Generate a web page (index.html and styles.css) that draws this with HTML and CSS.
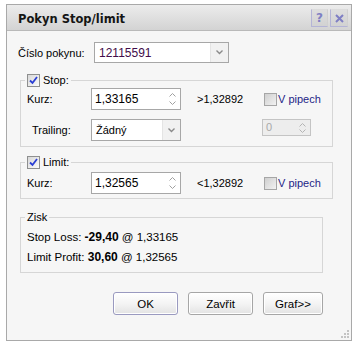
FILE: index.html
```html
<!DOCTYPE html>
<html lang="cs">
<head>
    <meta charset="UTF-8">
    <title>Pokyn Stop/limit</title>
    <link rel="stylesheet" href="styles.css">
</head>
<body>
    <div class="window">
        <div class="titlebar">
            <span class="title">Pokyn Stop/limit</span>
            <div class="title-buttons">
                <span class="tbtn help">?</span>
                <span class="tbtn close">
                    <svg width="9" height="9" viewBox="0 0 9 9"><path d="M1 1L8 8M8 1L1 8" stroke="#7f7fc4" stroke-width="2"/></svg>
                </span>
            </div>
        </div>

        <div class="content">
            <div class="order-row">
                <label class="order-label">Číslo pokynu:</label>
                <div class="combo order-combo">
                    <span class="combo-value order-value">12115591</span>
                    <span class="combo-drop">
                        <svg width="7" height="5" viewBox="0 0 7 5"><path d="M0.5 0.5L3.5 3.5L6.5 0.5" fill="none" stroke="#8a8a8a" stroke-width="1.4"/></svg>
                    </span>
                </div>
            </div>

            <fieldset class="group stop-group">
                <legend><span class="check checked"><svg width="9" height="9" viewBox="0 0 9 9"><path d="M1 4.5L3.5 7L8 1" fill="none" stroke="#2b3fd4" stroke-width="1.8"/></svg></span>Stop:</legend>
                <div class="row">
                    <span class="field-label">Kurz:</span>
                    <div class="spin">
                        <span class="spin-value">1,33165</span>
                        <span class="spin-arrows">
                            <svg width="7" height="4" viewBox="0 0 7 4"><path d="M0.5 3.5L3.5 0.5L6.5 3.5" fill="none" stroke="#a0a0a0"/></svg>
                            <svg width="7" height="4" viewBox="0 0 7 4"><path d="M0.5 0.5L3.5 3.5L6.5 0.5" fill="none" stroke="#a0a0a0"/></svg>
                        </span>
                    </div>
                    <span class="limit-value">&gt;1,32892</span>
                    <span class="check disabled"></span><span class="pips">V pipech</span>
                </div>
                <div class="row trailing-row">
                    <span class="field-label trailing-label">Trailing:</span>
                    <div class="combo trailing-combo">
                        <span class="combo-value">Žádný</span>
                        <span class="combo-drop">
                            <svg width="7" height="5" viewBox="0 0 7 5"><path d="M0.5 0.5L3.5 3.5L6.5 0.5" fill="none" stroke="#8a8a8a" stroke-width="1.4"/></svg>
                        </span>
                    </div>
                    <div class="mini-spin">
                        <span class="mini-value">0</span>
                        <span class="spin-arrows">
                            <svg width="7" height="4" viewBox="0 0 7 4"><path d="M0.5 3.5L3.5 0.5L6.5 3.5" fill="none" stroke="#b4b4b4"/></svg>
                            <svg width="7" height="4" viewBox="0 0 7 4"><path d="M0.5 0.5L3.5 3.5L6.5 0.5" fill="none" stroke="#b4b4b4"/></svg>
                        </span>
                    </div>
                </div>
            </fieldset>

            <fieldset class="group limit-group">
                <legend><span class="check checked"><svg width="9" height="9" viewBox="0 0 9 9"><path d="M1 4.5L3.5 7L8 1" fill="none" stroke="#2b3fd4" stroke-width="1.8"/></svg></span>Limit:</legend>
                <div class="row">
                    <span class="field-label">Kurz:</span>
                    <div class="spin">
                        <span class="spin-value">1,32565</span>
                        <span class="spin-arrows">
                            <svg width="7" height="4" viewBox="0 0 7 4"><path d="M0.5 3.5L3.5 0.5L6.5 3.5" fill="none" stroke="#a0a0a0"/></svg>
                            <svg width="7" height="4" viewBox="0 0 7 4"><path d="M0.5 0.5L3.5 3.5L6.5 0.5" fill="none" stroke="#a0a0a0"/></svg>
                        </span>
                    </div>
                    <span class="limit-value">&lt;1,32892</span>
                    <span class="check disabled"></span><span class="pips">V pipech</span>
                </div>
            </fieldset>

            <fieldset class="group profit-group">
                <legend class="plain-legend">Zisk</legend>
                <p class="profit-line">Stop Loss: <b>-29,40</b> @ 1,33165</p>
                <p class="profit-line">Limit Profit: <b>30,60</b> @ 1,32565</p>
            </fieldset>

            <div class="buttons">
                <button class="btn default">OK</button>
                <button class="btn">Zavřit</button>
                <button class="btn graf">Graf&gt;&gt;</button>
            </div>
        </div>
        <span class="grip">
            <svg width="8" height="8" viewBox="0 0 8 8" fill="#c4c4c4"><rect x="6" y="0" width="2" height="2"/><rect x="3" y="3" width="2" height="2"/><rect x="6" y="3" width="2" height="2"/><rect x="0" y="6" width="2" height="2"/><rect x="3" y="6" width="2" height="2"/><rect x="6" y="6" width="2" height="2"/></svg>
        </span>
    </div>
</body>
</html>
```

FILE: styles.css
```css
body {
    margin: 0;
    background-color: #fff;
    font-family: 'Liberation Sans', Arial, sans-serif;
    font-size: 11px;
    color: #000;
}

.window {
    position: relative;
    margin: 4px 0 0 6px;
    width: 346px;
    height: 337px;
    box-sizing: border-box;
    border: 1px solid #a9a9a9;
    background-color: #f6f6f6;
}

.titlebar {
    height: 25px;
    display: flex;
    align-items: center;
    justify-content: space-between;
    padding: 0 3px 0 11px;
    background: linear-gradient(#ececec, #e2e2e2 40%, #d3d3d3);
    border-bottom: 1px solid #b9b9b9;
}

.title {
    font-family: 'DejaVu Sans', Verdana, sans-serif;
    font-weight: bold;
    font-size: 11.5px;
    color: #151515;
    padding-top: 2px;
}

.title-buttons {
    display: flex;
    gap: 2px;
    align-self: flex-start;
    margin-top: 4px;
}

.tbtn {
    width: 17px;
    height: 18px;
    box-sizing: border-box;
    display: flex;
    align-items: center;
    justify-content: center;
    border: 1px solid #b4b4d6;
    border-top-color: #dcdcdc;
    border-right-color: #d0d0d0;
    background: linear-gradient(#dedede, #d2d2d2);
    color: #7f7fc4;
    font-family: 'DejaVu Sans', sans-serif;
    font-weight: bold;
    font-size: 12px;
}

.close {
    width: 18px;
}

.content {
    padding: 11px 0 0 11px;
}

.order-row {
    display: flex;
    align-items: center;
}

.order-label {
    width: 76px;
}

.combo {
    display: flex;
    height: 21px;
    box-sizing: border-box;
    border: 1px solid #a7a7a7;
    background-color: #fff;
}

.order-combo {
    width: 135px;
}

.combo-value {
    flex: 1;
    display: flex;
    align-items: center;
    padding-left: 4px;
}

.order-value {
    color: #420c4a;
    font-size: 12px;
}

.combo-drop {
    width: 17px;
    display: flex;
    align-items: center;
    justify-content: center;
    background-color: #f1f1f1;
    border-left: 1px solid #e4e4e4;
}

.group {
    box-sizing: border-box;
    margin: 0 0 0 2px;
    padding: 1px 0 5px 6px;
    border: 1px solid #d6d6d6;
}

.group legend {
    display: flex;
    align-items: center;
    gap: 3px;
    height: 14px;
    margin-left: -2px;
    padding: 0 2px;
}

.stop-group {
    width: 313px;
    margin-top: 10px;
}

.limit-group {
    width: 313px;
    margin-top: 8px;
    padding-top: 3px;
    padding-bottom: 4px;
}

.profit-group {
    width: 303px;
    margin-top: 11px;
    padding-top: 3px;
    padding-bottom: 5px;
}

.plain-legend {
    padding: 0 1px;
    margin-left: -1px;
}

.check {
    width: 13px;
    height: 13px;
    box-sizing: border-box;
    display: inline-flex;
    align-items: center;
    justify-content: center;
    border: 1px solid #8e8f8f;
}

.checked {
    background: linear-gradient(135deg, #d8d8d8, #fbfbfb);
}

.disabled {
    border-color: #a6a6a6;
    background: linear-gradient(135deg, #cfcfcf, #f2f2f2);
}

.row {
    display: flex;
    align-items: center;
}

.trailing-row {
    align-items: flex-start;
    margin-top: 9px;
}

.field-label {
    width: 64px;
}

.trailing-label {
    width: 59px;
    padding-left: 5px;
    line-height: 22px;
}

.spin {
    display: flex;
    width: 90px;
    height: 22px;
    box-sizing: border-box;
    border: 1px solid #a7a7a7;
    background-color: #fff;
}

.spin-value {
    flex: 1;
    display: flex;
    align-items: center;
    padding-left: 3px;
    font-size: 12px;
}

.spin-arrows {
    width: 15px;
    display: flex;
    flex-direction: column;
    align-items: center;
    justify-content: center;
    gap: 4px;
}

.limit-value {
    width: 67px;
    margin-left: 16px;
}

.pips {
    margin-left: 1px;
    color: #1e1e86;
}

.trailing-combo {
    width: 90px;
    height: 22px;
}

.mini-spin {
    display: flex;
    width: 49px;
    height: 17px;
    margin-left: 81px;
    box-sizing: border-box;
    border: 1px solid #c4c4c4;
    background-color: #ededed;
    color: #a9a9a9;
}

.mini-spin .spin-arrows {
    gap: 2px;
}

.mini-value {
    flex: 1;
    padding-left: 3px;
    line-height: 15px;
}

.profit-line {
    margin: 0;
    line-height: 20px;
    font-size: 11.5px;
}

.profit-line b {
    font-size: 12px;
}

.buttons {
    width: 303px;
    margin: 19px 0 0 2px;
    display: flex;
    justify-content: flex-end;
    gap: 10px;
}

.btn {
    width: 65px;
    height: 23px;
    font-family: 'Liberation Sans', Arial, sans-serif;
    font-size: 11.5px;
    color: #000;
    border: 1px solid #a6a6a6;
    border-radius: 3px;
    background: linear-gradient(#ffffff, #f4f4f4 50%, #e3e3e3);
    box-shadow: inset 0 0 0 1px #fff;
    padding: 0;
}

.default {
    border-color: #9a9ac0;
}

.graf {
    width: 60px;
}

.grip {
    position: absolute;
    right: 2px;
    bottom: 2px;
    line-height: 0;
}
```
